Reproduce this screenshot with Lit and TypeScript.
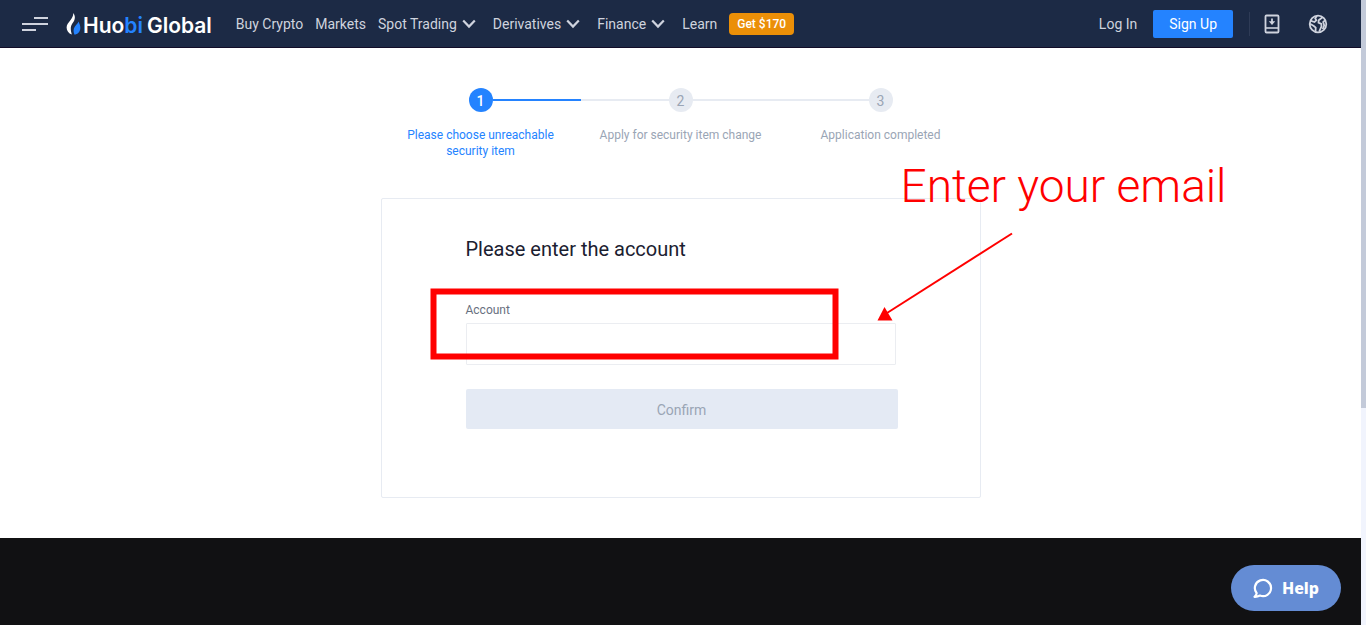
import { LitElement, html, css, svg, nothing } from "lit";
import { customElement, property, state } from "lit/decorators.js";

interface NavItem {
  label: string;
  menu?: boolean;
}

const NAV: NavItem[] = [
  { label: "Buy Crypto" },
  { label: "Markets" },
  { label: "Spot Trading", menu: true },
  { label: "Derivatives", menu: true },
  { label: "Finance", menu: true },
  { label: "Learn" },
];

const STEPS = [
  "Please choose unreachable security item",
  "Apply for security item change",
  "Application completed",
];

const chevron = html`<svg class="chevron" width="14" height="10" viewBox="0 0 14 10" aria-hidden="true">
  ${svg`<path d="M1.2 1.6 7 7.6l5.8-6" fill="none" stroke="currentColor" stroke-width="2.2"/>`}
</svg>`;

@customElement("site-header")
class SiteHeader extends LitElement {
  static styles = css`
    :host {
      display: block;
      background: #1c2a45;
      border-bottom: 1px solid #120d28;
      color: #cfd3de;
      font-size: 14px;
    }
    .bar {
      display: flex;
      align-items: center;
      height: 47px;
      padding: 0 33px 0 22px;
    }
    a {
      color: inherit;
      text-decoration: none;
      white-space: nowrap;
    }
    button {
      font: inherit;
      color: inherit;
      border: 0;
      padding: 0;
      background: none;
      display: flex;
      align-items: center;
      white-space: nowrap;
      cursor: pointer;
    }
    svg {
      display: block;
      flex: none;
    }
    .logo {
      display: flex;
      align-items: center;
      gap: 2px;
      margin: 0 24px 0 18px;
      color: #fff;
      font: 600 21px/24px Inter, Roboto, sans-serif;
    }
    .wordmark {
      display: flex;
      gap: 4px;
      padding-top: 4px;
    }
    .logo .blue {
      color: #2483ff;
    }
    nav {
      display: flex;
      align-items: center;
      gap: 12px;
    }
    .chevron {
      margin: 0 5px;
    }
    .promo {
      background: #eb8f07;
      color: #fff;
      font-size: 12px;
      font-weight: 500;
      line-height: 22px;
      padding: 0 8px;
      border-radius: 4px;
    }
    .account {
      display: flex;
      align-items: center;
      margin-left: auto;
    }
    .signup {
      background: #2483ff;
      color: #fff;
      line-height: 28px;
      padding: 0 16px;
      margin: 0 16px;
      border-radius: 2px;
    }
    .rule {
      width: 1px;
      height: 24px;
      background: #2e3b56;
      margin-right: 14px;
    }
    .globe {
      margin-left: 28px;
    }
  `;

  render() {
    return html`
      <header class="bar">
        <button aria-label="Menu">
          <svg width="26" height="16" viewBox="0 0 26 16" fill="currentColor">
            <path d="M12 1h14v2H12zM0 7h26v2H0zM0 13h14v2H0z" />
          </svg>
        </button>
        <a class="logo" href="#">
          <svg width="15" height="22" viewBox="0 0 15 22" aria-hidden="true">
            <path fill="#fff" d="M7.3 0c2 2.600 2 5.500.7 8-1.200 2.300-3 3.800-3.200 6.600-.2 2.500.4 4.900 1 7C2.600 20.500.6 17.900.6 14.600c0-3 1.800-5 3.600-7.200C6 5.200 7.300 3.200 7.300 0z" />
            <path fill="#2483ff" d="M12.400 8.600c2 3.600 2.700 7 1 9.900-1.100 1.900-2.800 2.900-4.800 3.200-1.500-2.700-1.400-5.600.3-8.100 1.300-1.900 3.100-2.800 3.500-5z" />
          </svg>
          <span class="wordmark"><span>Huo<span class="blue">bi</span></span> <span>Global</span></span>
        </a>
        <nav aria-label="Main">
          ${NAV.map((item) =>
            item.menu
              ? html`<button>${item.label}${chevron}</button>`
              : html`<a href="#">${item.label}</a>`
          )}
          <a class="promo" href="#">Get $170</a>
        </nav>
        <div class="account">
          <a href="#">Log In</a>
          <a class="signup" href="#">Sign Up</a>
          <span class="rule"></span>
          <button aria-label="Download app">
            <svg width="16" height="20" viewBox="0 0 16 20" fill="none" stroke="currentColor">
              <rect x="1.500" y="1.500" width="13" height="17" rx="1" stroke-width="1.800" />
              <path d="M1.500 14h13" stroke-width="1.600" />
              <path d="M8 4.500v4" stroke-width="1.800" />
              <path d="M4.800 7.300h6.400L8 11z" fill="currentColor" stroke="none" />
            </svg>
          </button>
          <button class="globe" aria-label="Language">
            <svg width="20" height="20" viewBox="0 0 20 20" fill="none" stroke="currentColor" stroke-width="1.800">
              <circle cx="10" cy="10" r="8.300" />
              <path d="M2.300 6.600 6.500 8 8.300 6.300 7.200 4.300 9 2" />
              <path d="M2 9.800 5.800 12l1.900 1.600-.2 4" />
              <path d="M14.500 3.200 10.700 6.200l-.2 2.400 2.800 1.300.2 2.400-2.300 5.400" />
              <path d="M17.200 6.200 15.200 8l1 3.400-1.500 3.800" />
            </svg>
          </button>
        </div>
      </header>
    `;
  }
}

@customElement("step-bar")
class StepBar extends LitElement {
  @property({ type: Number }) current = 1;

  static styles = css`
    ol {
      display: grid;
      grid-template-columns: repeat(3, 1fr);
      list-style: none;
      margin: 0;
      padding: 0;
      color: #9aa5b5;
      font-size: 12px;
      line-height: 16px;
      text-align: center;
    }
    .track {
      display: flex;
      align-items: center;
      margin-bottom: 15px;
    }
    .line {
      flex: 1;
      height: 2px;
      background: #e7ebf2;
    }
    .dot {
      width: 24px;
      height: 24px;
      border-radius: 50%;
      background: #e7ebf2;
      font-size: 14px;
      line-height: 26px;
    }
    .label {
      padding: 0 16px;
    }
    .active {
      color: #2483ff;
    }
    .active .dot {
      color: #fff;
      background: #2483ff;
      font-weight: 500;
    }
    .active .line {
      background: #2483ff;
    }
    .track .blank {
      visibility: hidden;
    }
  `;

  render() {
    return html`<ol>
      ${STEPS.map(
        (label, i) => html`<li
          class=${i < this.current ? "active" : ""}
          aria-current=${i + 1 === this.current ? "step" : nothing}
        >
          <div class="track">
            <span class="line ${i === 0 ? "blank" : ""}"></span>
            <span class="dot">${i + 1}</span>
            <span class="line ${i === STEPS.length - 1 ? "blank" : ""}"></span>
          </div>
          <div class="label">${label}</div>
        </li>`
      )}
    </ol>`;
  }
}

@customElement("account-form")
class AccountForm extends LitElement {
  @state() private account = "";

  static styles = css`
    form {
      display: flex;
      flex-direction: column;
      border: 1px solid #e7ebf2;
      border-radius: 2px;
      padding: 36px 82px 68px 84px;
    }
    h1 {
      margin: 0 0 39px;
      color: #1b2030;
      font-size: 20px;
      font-weight: 400;
      line-height: 28px;
    }
    label {
      color: #697080;
      font-size: 12px;
      line-height: 16px;
      margin-bottom: 5px;
    }
    input {
      box-sizing: border-box;
      height: 42px;
      margin: 0 2px 24px 0;
      padding: 0 12px;
      border: 1px solid #ebedf1;
      border-radius: 1px;
      font: inherit;
      font-size: 14px;
      outline: none;
    }
    button {
      height: 40px;
      border: 0;
      border-radius: 2px;
      padding: 2px 12px 0;
      background: #e4eaf4;
      color: #9aa5b5;
      font: inherit;
      font-size: 14px;
    }
  `;

  render() {
    return html`<form @submit=${(e: Event) => e.preventDefault()}>
      <h1>Please enter the account</h1>
      <label for="account">Account</label>
      <input
        id="account"
        type="text"
        .value=${this.account}
        @input=${(e: Event) => (this.account = (e.target as HTMLInputElement).value)}
      />
      <button type="submit" ?disabled=${!this.account}>Confirm</button>
    </form>`;
  }
}

@customElement("app-root")
class AppRoot extends LitElement {
  static styles = css`
    :host {
      display: grid;
      grid-template-columns: minmax(0, 1fr) 5px;
      min-height: 100vh;
      position: relative;
      background: #fff;
      font-family: Roboto, "Liberation Sans", sans-serif;
    }
    .page {
      display: flex;
      flex-direction: column;
    }
    main {
      box-sizing: border-box;
      width: 100%;
      max-width: 600px;
      margin: 0 auto;
      padding: 40px 0;
    }
    .card {
      position: relative;
      margin-top: 39px;
    }
    .marks {
      position: absolute;
      left: 0;
      top: 0;
      overflow: visible;
      pointer-events: none;
    }
    .note {
      position: absolute;
      left: 520px;
      top: -44px;
      margin: 0;
      color: #f00;
      font: 300 46px/64px Roboto, "Open Sans", sans-serif;
      white-space: nowrap;
    }
    footer {
      flex: 1;
      background: #111113;
    }
    .scroll {
      background: #f1f4fd;
    }
    .thumb {
      height: 408px;
      background: #c3cad9;
    }
    .help {
      position: absolute;
      right: 25px;
      bottom: 14px;
      display: flex;
      align-items: center;
      gap: 9px;
      height: 46px;
      padding: 0 22px;
      border: 0;
      border-radius: 23px;
      background: #648cd4;
      color: #fff;
      font: 800 16px/24px "Noto Sans", "Open Sans", sans-serif;
      cursor: pointer;
    }
  `;

  render() {
    return html`
      <div class="page">
        <site-header></site-header>
        <main>
          <step-bar .current=${1}></step-bar>
          <div class="card">
            <account-form></account-form>
            <svg class="marks" width="600" height="300" viewBox="0 0 600 300" fill="none" aria-hidden="true">
              <rect x="52.500" y="93.500" width="402" height="65" stroke="#f00" stroke-width="6" />
              <path d="M631 35.500 506 115" stroke="#f00" stroke-width="2" />
              <path d="M496.500 122.500 503.500 109l8 13.500z" fill="#f00" />
            </svg>
            <p class="note">Enter your email</p>
          </div>
        </main>
        <footer></footer>
      </div>
      <div class="scroll"><div class="thumb"></div></div>
      <button class="help">
        <svg width="20" height="20" viewBox="0 0 20 20" fill="none" aria-hidden="true">
          <path
            d="M3.700 15.200A8.100 8.100 0 1 1 7 17.600c-1.600.8-3.600 1.300-5.500 1.200 1.200-.9 2-2.200 2.200-3.600z"
            stroke="#fff"
            stroke-width="2.200"
            stroke-linejoin="round"
          />
        </svg>
        Help
      </button>
    `;
  }
}
